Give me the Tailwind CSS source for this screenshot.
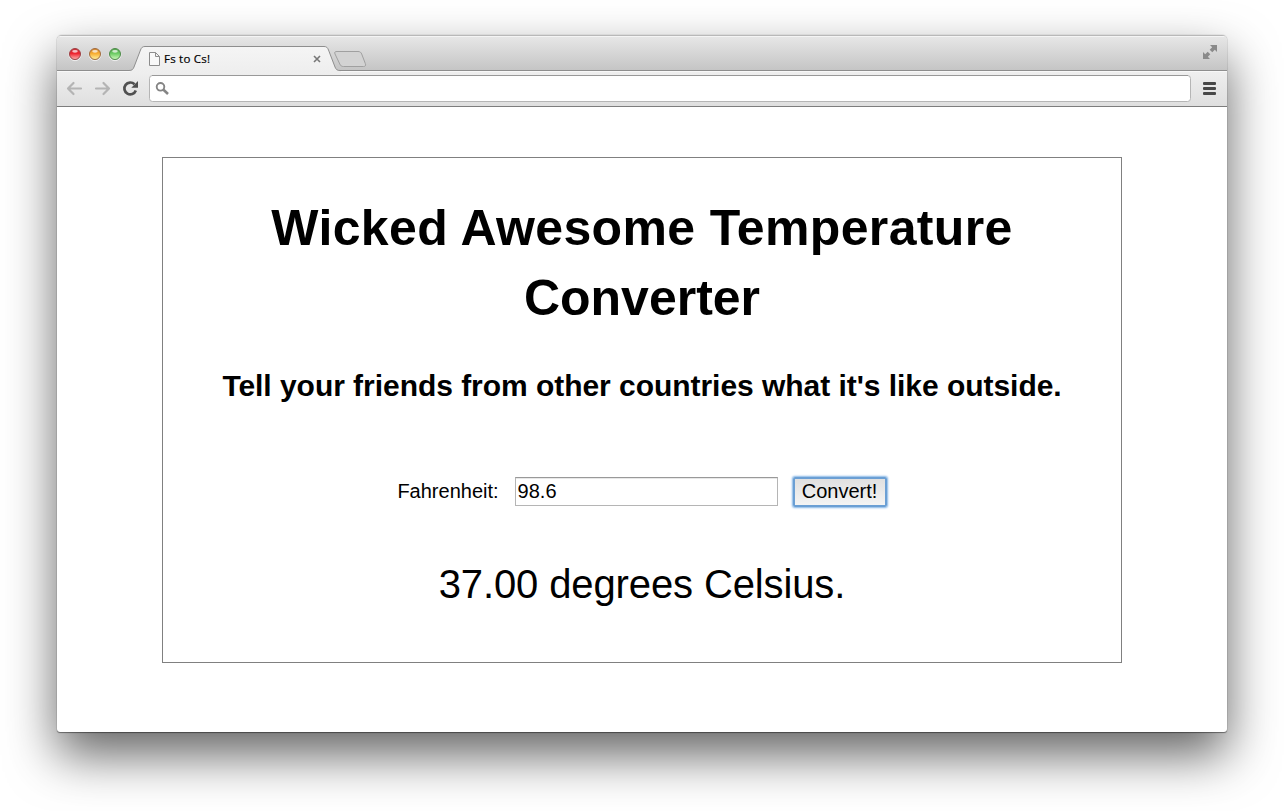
<!DOCTYPE html>
<html lang="en">
<head>
<meta charset="utf-8">
<title>Fs to Cs!</title>
<script src="https://cdn.jsdelivr.net/npm/@tailwindcss/browser@4"></script>
</head>
<body class="bg-white h-[811px] overflow-hidden pt-[35px] pl-[57px] font-['Liberation_Sans',Arial,sans-serif] text-black">
<div class="w-[1170px] h-[697px] rounded-t-[5px] rounded-b-[3px] bg-white overflow-hidden flex flex-col shadow-[0_1px_1px_0_rgba(0,0,0,0.4),0_0_1px_0_rgba(0,0,0,0.5),0_23px_50px_rgba(0,0,0,0.61)]">
  <header class="shrink-0">
    <svg class="block" width="1170" height="72" viewBox="57 35 1170 72">
      <defs>
        <linearGradient id="strip" x1="0" y1="0" x2="0" y2="1"><stop offset="0" stop-color="#e8e8e8"/><stop offset="1" stop-color="#c4c4c4"/></linearGradient>
        <linearGradient id="bar" gradientUnits="userSpaceOnUse" x1="0" y1="46" x2="0" y2="106"><stop offset="0" stop-color="#f5f5f5"/><stop offset=".45" stop-color="#eeeeee"/><stop offset="1" stop-color="#dfdfdf"/></linearGradient>
        <linearGradient id="red" x1="0" y1="0" x2="0" y2="1"><stop offset="0" stop-color="#c8323a"/><stop offset=".45" stop-color="#ee2530"/><stop offset="1" stop-color="#ffb5b0"/></linearGradient>
        <linearGradient id="amber" x1="0" y1="0" x2="0" y2="1"><stop offset="0" stop-color="#cd8230"/><stop offset=".45" stop-color="#f8ad32"/><stop offset="1" stop-color="#fff4a0"/></linearGradient>
        <linearGradient id="green" x1="0" y1="0" x2="0" y2="1"><stop offset="0" stop-color="#54a34e"/><stop offset=".45" stop-color="#6ccb64"/><stop offset="1" stop-color="#d0fbbd"/></linearGradient>
      </defs>
      <rect x="57" y="35" width="1170" height="36" fill="url(#strip)"/>
      <path d="M57 35.500H1227" stroke="#b8b8b8"/><path d="M60 36.500H1224" stroke="#f4f4f4"/>
      <path d="M57 106V70.500H129C132 70.500 133 69.500 134 67L140.500 50C141.500 47.500 142.500 46.500 145 46.500H324C326.500 46.500 327.500 47.500 328.500 50L335 67C336 69.500 337 70.500 340 70.500H1227V106Z" fill="url(#bar)"/>
      <path d="M57 70.500H129C132 70.500 133 69.500 134 67L140.500 50C141.500 47.500 142.500 46.500 145 46.500H324C326.500 46.500 327.500 47.500 328.500 50L335 67C336 69.500 337 70.500 340 70.500H1227" fill="none" stroke="#8e8e8e"/>
      <path d="M57 71.500H130M341 71.500H1227" stroke="#f8f8f8"/>
      <path d="M337 51.500H358C360 51.500 361 52.300 361.700 54L365.300 63.500C366 65.500 365.500 66.500 363.500 66.500H343.500C341.500 66.500 340.500 65.700 339.800 64L335 54C334.200 52 335 51.500 337 51.500Z" fill="#d3d3d3" stroke="#a0a0a0"/>
      <circle cx="75" cy="54.700" r="6" fill="none" stroke="#eeeeee"/><circle cx="75" cy="54" r="5.500" fill="url(#red)" stroke="#9b4246"/>
      <circle cx="95" cy="54.700" r="6" fill="none" stroke="#eeeeee"/><circle cx="95" cy="54" r="5.500" fill="url(#amber)" stroke="#a06c42"/>
      <circle cx="115" cy="54.700" r="6" fill="none" stroke="#eeeeee"/><circle cx="115" cy="54" r="5.500" fill="url(#green)" stroke="#4f8a4b"/>
      <g fill="#ffffff" opacity=".7"><ellipse cx="75" cy="51.300" rx="2.800" ry="1.400"/><ellipse cx="95" cy="51.300" rx="2.800" ry="1.400"/><ellipse cx="115" cy="51.300" rx="2.800" ry="1.400"/></g>
      <path d="M149.500 52.500H155.500L159.500 56.500V65.500H149.500ZM155.500 52.500V56.500H159.500" fill="#f8f8f8" stroke="#8c8c8c"/>
      <text x="164" y="63" font-family="Open Sans, Noto Sans, sans-serif" font-size="11.500" font-weight="500" textLength="46" stroke="#000000" stroke-width=".2">Fs to Cs!</text>
      <path d="M314 56L320 62M320 56L314 62" stroke="#777777" stroke-width="1.600"/>
      <g fill="#8a8a8a"><path d="M1210 45H1217V52L1214.800 49.800L1212.300 52.300L1209.700 49.700L1212.200 47.200Z"/><path d="M1203 52V59H1210L1207.800 56.800L1210.300 54.300L1207.700 51.700L1205.200 54.200Z"/></g>
      <g fill="none" stroke="#b4b4b4" stroke-width="2.200" stroke-linecap="round" stroke-linejoin="round"><path d="M81 88.500H68.500M73.500 83L68 88.500L73.500 94"/><path d="M96 88.500H108.500M103.500 83L109 88.500L103.500 94"/></g>
      <path d="M134.500 84.300A5.900 5.900 0 1 0 135.800 90.500" fill="none" stroke="#505050" stroke-width="2.700"/><path d="M138 81V87.700H131.300Z" fill="#505050"/>
      <rect x="149.500" y="75.500" width="1041" height="26" rx="3" fill="#ffffff" stroke="#b5b5b5"/>
      <path d="M152 75.500H1188" stroke="#999999"/>
      <circle cx="160.500" cy="86.800" r="3.800" fill="none" stroke="#858585" stroke-width="1.900"/><path d="M163.500 89.800L168 94" stroke="#858585" stroke-width="2.600"/>
      <g fill="#484848"><rect x="1203" y="82" width="13" height="3" rx="1"/><rect x="1203" y="87" width="13" height="3" rx="1"/><rect x="1203" y="92" width="13" height="3" rx="1"/></g>
      <path d="M57 106.500H1227" stroke="#7d7d7d"/>
    </svg>
  </header>
  <main class="mt-[50px] mx-auto w-[960px] h-[506px] border border-[#808080] text-center flex flex-col items-center">
    <h1 class="mt-[35px] text-[50px] leading-[70px] font-bold whitespace-nowrap"><span class="tracking-[0.35px]">Wicked Awesome Temperature</span><br>Converter</h1>
    <h2 class="mt-[32px] text-[30px] leading-[42px] font-bold whitespace-nowrap tracking-[-0.04px]">Tell your friends from other countries what it's like outside.</h2>
    <form class="mt-[70px] h-[30px] flex items-start text-[20px] leading-[28px]">
      <label for="f" class="mr-[16px]">Fahrenheit:</label>
      <input id="f" type="text" value="98.6" class="w-[263px] h-[29px] px-[2px] border border-[#b5b5b5] border-t-[#999999] shadow-[inset_0_1px_0_#e8e8e8]">
      <button type="button" class="ml-[15px] w-[94px] h-[30px] leading-[25px] pb-[1px] border-2 border-[#6b9fd4] rounded-[2px] bg-linear-to-b from-[#e0e0e0] to-[#f4f4f4] shadow-[0_0_2px_1px_#84b5e6]">Convert!</button>
    </form>
    <p class="mt-[49px] text-[40px] leading-[56px] whitespace-nowrap tracking-[-0.12px]">37.00 degrees Celsius.</p>
  </main>
</div>
</body>
</html>
